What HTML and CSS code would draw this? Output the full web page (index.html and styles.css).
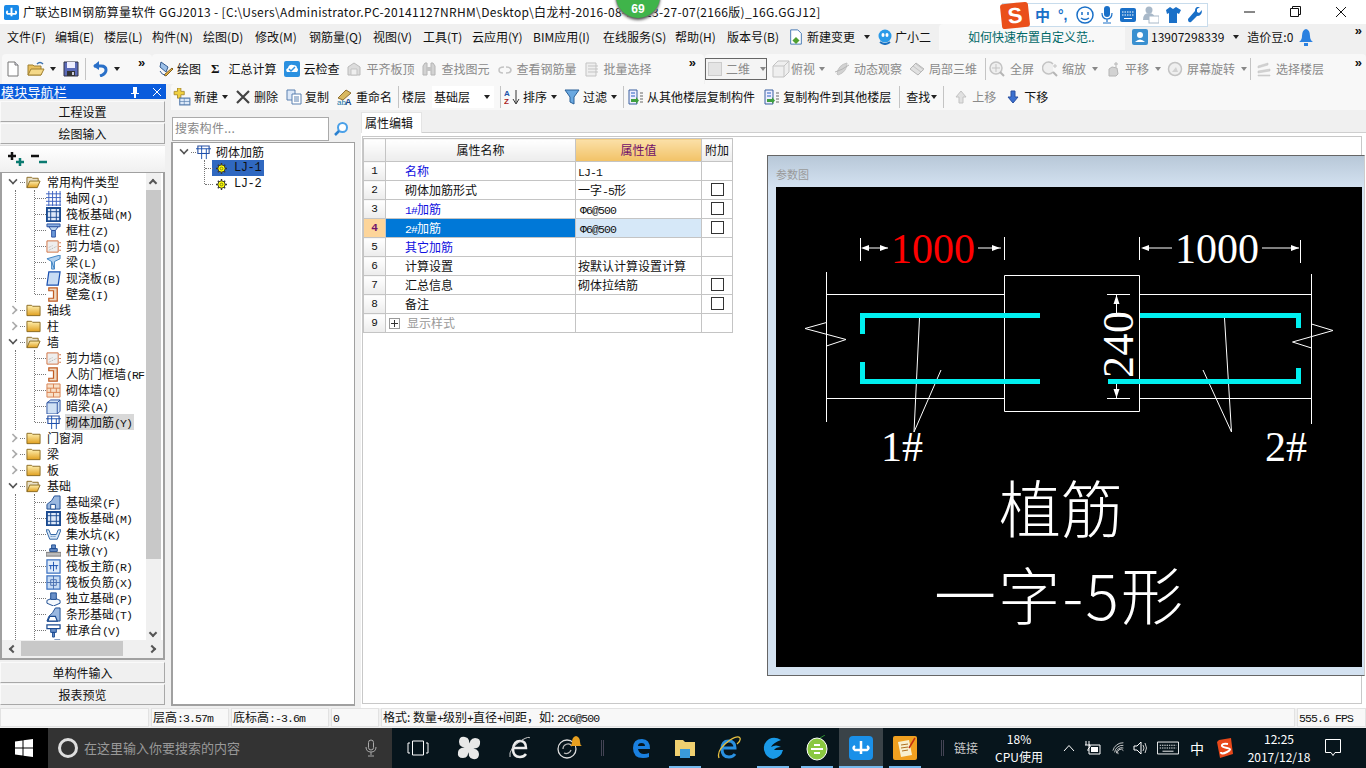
FILE: index.html
```html
<!DOCTYPE html>
<html lang="zh-CN">
<head>
<meta charset="utf-8">
<title>广联达BIM钢筋算量软件 GGJ2013</title>
<link rel="stylesheet" href="styles.css">
</head>
<body>
<svg class="defs" width="0" height="0">
<defs>
<symbol id="new" viewBox="0 0 16 16"><path d="M3 1h7l3 3v11H3z" fill="#fff" stroke="#777"/><path d="M10 1v3h3" fill="#dde" stroke="#777"/></symbol>
<symbol id="open" viewBox="0 0 18 16"><path d="M1 14V4h5l1 1h7v9z" fill="#e8c060" stroke="#a08030"/><path d="M1 14l3-6h13l-3 6z" fill="#f4d888" stroke="#a08030"/><path d="M10 3q3-3 6 0" fill="none" stroke="#3a70b0" stroke-width="1.5"/></symbol>
<symbol id="save" viewBox="0 0 16 16"><path d="M1 1h14v14H1z" fill="#5a6ab8" stroke="#334"/><path d="M4 1h8v6H4z" fill="#eef"/><path d="M4 10h8v5H4z" fill="#333"/><path d="M9 11h2v3H9z" fill="#ccd"/></symbol>
<symbol id="undo" viewBox="0 0 16 16"><path d="M2 5h7q5 0 5 4t-6 6" fill="none" stroke="#2a70c8" stroke-width="3"/><path d="M7 0L1 5l6 4z" fill="#2a70c8"/></symbol>
<symbol id="draw" viewBox="0 0 16 16"><path d="M3 1l7 5-2 5-6-5z" fill="#9cc0e8" stroke="#345a90"/><path d="M6 14l8-7 1 1-7 7z" fill="#e8b040" stroke="#806020"/><path d="M2 10q2 4 5 4" fill="none" stroke="#345a90"/></symbol>
<symbol id="cloud" viewBox="0 0 16 16"><rect width="16" height="16" rx="2" fill="#2a90e0"/><path d="M3 11q-2-3 1-4 1-4 5-3 4 0 4 3 2 1 0 4z" fill="#fff"/><path d="M5 8l2 2 4-4" fill="none" stroke="#2a90e0" stroke-width="1.5"/></symbol>
<symbol id="gray" viewBox="0 0 16 16"><path d="M2 14V6l6-4 6 4v8z" fill="#d8d8d8" stroke="#b0b0b0"/><path d="M5 8h6v6H5z" fill="#eee" stroke="#bbb"/></symbol>
<symbol id="binoc" viewBox="0 0 16 16"><path d="M2 14V5l2-3h2v12zM10 14V2h2l2 3v9z" fill="#ccc" stroke="#aaa"/><path d="M6 6h4v4H6z" fill="#bbb"/></symbol>
<symbol id="link" viewBox="0 0 16 16"><path d="M7 6Q2 6 2 9t4 3M9 6q5 0 5 3t-5 3" fill="none" stroke="#bbb" stroke-width="1.5"/></symbol>
<symbol id="batch" viewBox="0 0 16 16"><path d="M2 2h10v13H2z" fill="#eee" stroke="#bbb"/><path d="M4 5h10M4 8h10M4 11h10" stroke="#bbb"/></symbol>
<symbol id="cube" viewBox="0 0 18 18"><path d="M1 6l5-5h11v11l-5 5H1z" fill="#eee" stroke="#bbb"/><path d="M1 6h11v11M12 6l5-5" fill="none" stroke="#bbb"/></symbol>
<symbol id="orbit" viewBox="0 0 16 16"><path d="M3 13Q4 4 13 2q0 9-9 12z" fill="#ccc" stroke="#bbb"/><path d="M1 11Q8 9 15 4" fill="none" stroke="#aaa"/></symbol>
<symbol id="local" viewBox="0 0 16 16"><path d="M1 8l6-6 8 6-6 6z" fill="#ddd" stroke="#aaa"/><path d="M4 5l8 6M7 3l8 6" stroke="#bbb"/></symbol>
<symbol id="zoom" viewBox="0 0 16 16"><circle cx="7" cy="7" r="6" fill="#eee" stroke="#bbb" stroke-width="1.5"/><path d="M7 3v8M3 7h8" stroke="#bbb"/><path d="M11 11l4 4" stroke="#aaa" stroke-width="2"/></symbol>
<symbol id="zoom2" viewBox="0 0 16 16"><path d="M11 3a6 6 0 1 0 0 8" fill="#eee" stroke="#bbb" stroke-width="1.5"/><path d="M11 11l4 4" stroke="#aaa" stroke-width="2"/><path d="M11 5h4M13 3v4" stroke="#bbb"/></symbol>
<symbol id="pan" viewBox="0 0 16 16"><path d="M4 15V8l3-2 5 1 1 6-2 2z" fill="#ccc" stroke="#aaa"/><path d="M11 1v5M9 3h4" stroke="#aaa"/></symbol>
<symbol id="rot" viewBox="0 0 16 16"><circle cx="8" cy="8" r="6.5" fill="#eee" stroke="#bbb" stroke-width="1.5"/><path d="M5 11l4-5 2 5z" fill="#ccc"/></symbol>
<symbol id="layer" viewBox="0 0 16 16"><path d="M2 5l10-3v2L2 7zM2 10l12-2v2L2 12zM2 14h12v1H2z" fill="#ccc" stroke="#bbb" stroke-width=".5"/></symbol>
<symbol id="plus" viewBox="0 0 16 16"><path d="M7 2h3v3h3v3h-3v3H7V8H4V5h3z" fill="#f0d040" stroke="#a08020" stroke-width=".7" transform="translate(-3 -2)"/><path d="M6 9h9v6H6z" fill="#dbe8f8" stroke="#5a80b0"/><path d="M6 12h9M10 9v6" stroke="#5a80b0" stroke-width=".6"/></symbol>
<symbol id="del" viewBox="0 0 16 16"><path d="M2 2l12 12M14 2L2 14" stroke="#444" stroke-width="2.2"/></symbol>
<symbol id="copy" viewBox="0 0 16 16"><path d="M1 1h8v10H1z" fill="#dce8f8" stroke="#5a80b0"/><path d="M6 5h9v10H6z" fill="#fff" stroke="#5a80b0"/><path d="M8 8h5M8 10h5M8 12h5" stroke="#5a80b0"/></symbol>
<symbol id="rename" viewBox="0 0 16 16"><path d="M1 9l8-8 5 3-8 7z" fill="#d8b860" stroke="#907030"/><text x="0" y="16" font-size="8" fill="#27a" font-family="Liberation Sans">ab</text><text x="8" y="16" font-size="9" fill="#148" font-family="Liberation Sans" font-weight="bold">A</text></symbol>
<symbol id="sort" viewBox="0 0 16 16"><text x="0" y="7" font-size="8" font-weight="bold" fill="#2255aa" font-family="Liberation Sans">A</text><text x="0" y="15" font-size="8" font-weight="bold" fill="#aa2222" font-family="Liberation Sans">Z</text><path d="M12 1v13M9 10l3 5 3-5" fill="none" stroke="#333"/></symbol>
<symbol id="filter" viewBox="0 0 16 16"><path d="M1 1h14L10 8v7l-4-2V8z" fill="#6aa8e0" stroke="#2a6098"/></symbol>
<symbol id="cpl" viewBox="0 0 16 16"><path d="M1 1h8v14H1z" fill="#eef" stroke="#3a60a0"/><path d="M3 4h4M3 7h4" stroke="#2860c0"/><path d="M3 10h5v-2l3 3.500-3 3.500v-2H3z" fill="#40a040"/><path d="M12 4h3M12 7h3M12 10h3M12 13h3" stroke="#666"/></symbol>
<symbol id="up" viewBox="0 0 12 14"><path d="M6 1l5 6H8v6H4V7H1z" fill="#ddd" stroke="#bbb"/></symbol>
<symbol id="down" viewBox="0 0 12 14"><path d="M6 13l5-6H8V1H4v6H1z" fill="#3a70d0" stroke="#2a50a0"/></symbol>
<symbol id="doc" viewBox="0 0 16 18"><path d="M2 1h8l4 4v12H2z" fill="#fff" stroke="#3a70b0"/><path d="M8 9l4 4-4 4-4-4z" fill="#50a030"/></symbol>
<symbol id="bot" viewBox="0 0 16 16"><circle cx="8" cy="7" r="6.500" fill="#2a9ae8"/><ellipse cx="6" cy="6" rx="1.500" ry="2" fill="#fff"/><ellipse cx="10" cy="6" rx="1.500" ry="2" fill="#fff"/><path d="M3 13q5 4 10 0" fill="none" stroke="#1a70c0" stroke-width="2"/></symbol>
<symbol id="user" viewBox="0 0 16 16"><rect width="16" height="16" rx="2" fill="#3a90d0"/><circle cx="8" cy="6" r="3" fill="#fff"/><path d="M3 13q5-5 10 0z" fill="#fff"/></symbol>
<symbol id="bell" viewBox="0 0 14 18"><path d="M7 1Q3 2 3 8q0 4-3 6h14q-3-2-3-6 0-6-4-7z" fill="#2a80e0"/><path d="M5 15h4v3H5z" fill="#2a80e0"/></symbol>
<symbol id="folderc" viewBox="0 0 16 14"><path d="M1 2h5l1 1h8v10H1z" fill="url(#fy)" stroke="#8a6a20"/></symbol>
<symbol id="foldero" viewBox="0 0 16 14"><path d="M1 13V2h5l1 1h6v3" fill="#e8e0c8" stroke="#8a6a20"/><path d="M1 13l3-7h11l-3 7z" fill="url(#fy)" stroke="#8a6a20"/></symbol>
<linearGradient id="fy" x1="0" y1="0" x2="0" y2="1"><stop offset="0" stop-color="#fff0b0"/><stop offset="1" stop-color="#e0a020"/></linearGradient>
<symbol id="t-grid" viewBox="0 0 16 16"><path d="M3 0v16M7 0v16M11 0v16M15 0v16M0 3h16M0 7h16M0 11h16M0 15h16" stroke="#3a60c0" fill="none"/></symbol>
<symbol id="t-raft" viewBox="0 0 16 16"><path d="M1 1h14v14H1z" fill="#dce8f8" stroke="#1a4a90" stroke-width="2"/><path d="M5 1v14M11 1v14M1 5h14M1 11h14" stroke="#1a4a90"/></symbol>
<symbol id="t-col" viewBox="0 0 16 16"><path d="M1 1h14v3H1z" fill="#8ab0e0" stroke="#2a50a0"/><path d="M3 4l3 4h4l3-4z" fill="#c0d8f0" stroke="#2a50a0"/><path d="M6 8h4v7H6z" fill="#6a98d8" stroke="#2a50a0"/></symbol>
<symbol id="t-wall" viewBox="0 0 16 16"><path d="M1 2h12v12H1z" fill="#eee" stroke="#d07040"/><path d="M3 12l8-4M3 9l4-2" stroke="#aaa" stroke-dasharray="1 1"/><path d="M14 4h2M14 8h2M14 12h2" stroke="#d07040"/></symbol>
<symbol id="t-beam" viewBox="0 0 16 16"><path d="M1 4l14-4v4l-6 3v8H6V7z" fill="#b0d0f0" stroke="#3a80c0"/><path d="M6 7l3 8" stroke="#3a80c0"/></symbol>
<symbol id="t-slab" viewBox="0 0 16 16"><path d="M3 1h12l-2 14H1z" fill="#c8dcf4" stroke="#1a50b0" stroke-width="1.300"/></symbol>
<symbol id="t-niche" viewBox="0 0 16 16"><path d="M3 1h9v14H3v-3h5V4H3z" fill="#f0d8c0" stroke="#c05a20" stroke-width="1.300"/></symbol>
<symbol id="t-brick" viewBox="0 0 16 16"><path d="M1 1h14v14H1z" fill="#f8e0c8" stroke="#d88050"/><path d="M1 5.500h14M1 10h14M8 1v4.500M5 5.500V10M11 5.500V10M8 10v5" stroke="#d88050"/></symbol>
<symbol id="t-dark" viewBox="0 0 16 16"><path d="M1 4l4-3h10v12l-3 3H1z" fill="#cfe0f4" stroke="#2a50a0"/><path d="M1 4h11v12M12 4l3-3" fill="none" stroke="#2a50a0"/></symbol>
<symbol id="t-rein" viewBox="0 0 16 16"><path d="M2 1h12v8H2z" fill="none" stroke="#2a50a0" stroke-width="1.200"/><path d="M0 4h16M6 1v14M11 4v11M6 9h5" stroke="#1a50b0"/></symbol>
<symbol id="t-fb" viewBox="0 0 16 16"><path d="M1 15V10l5-4 3-5h6v14z" fill="#9ab8e0" stroke="#1a4a90"/><path d="M5 15V10h5v5z" fill="#fff" stroke="#1a4a90"/></symbol>
<symbol id="t-pit" viewBox="0 0 16 16"><path d="M0 3h3l2 5h6l2-5h3l-4 10H4z" fill="#d8e8f8" stroke="#2a60a0"/><path d="M5 10h6" stroke="#2a60a0" stroke-dasharray="1 1"/></symbol>
<symbol id="t-pier" viewBox="0 0 16 16"><path d="M6 2h4v4H6zM4 6h8v3H4z" fill="#6a90c8" stroke="#1a4a90"/><path d="M0 10h16v4H0z" fill="#bbb" stroke="#777"/></symbol>
<symbol id="t-main" viewBox="0 0 16 16"><path d="M1 1h14v14H1z" fill="#e0ecfa" stroke="#3a70c0" stroke-width="1.300"/><path d="M8 3v10M3 7h10M5 7v4M11 7v4" stroke="#1a50b0"/></symbol>
<symbol id="t-neg" viewBox="0 0 16 16"><path d="M1 1h14v14H1z" fill="#c8dcf4" stroke="#3a70c0" stroke-width="1.300"/><path d="M8 1v14M1 8h14M5 5h6v6H5z" stroke="#4a70b0" fill="none"/></symbol>
<symbol id="t-iso" viewBox="0 0 16 16"><path d="M1 10l7-3 7 3v3l-7 3-7-3z" fill="#f4f8fc" stroke="#1a4a90"/><path d="M5 2h6v7H5z" fill="#6a90c8" stroke="#1a4a90"/></symbol>
<symbol id="t-str" viewBox="0 0 16 16"><path d="M1 15l2-5 4-4 3-5h5v14z" fill="#9ab8e0" stroke="#1a4a90"/><path d="M2 15l2-5h6l2 5z" fill="#fff" stroke="#1a4a90" stroke-width="1.300"/></symbol>
<symbol id="t-cap" viewBox="0 0 16 16"><path d="M1 2h14v4H1z" fill="#fff" stroke="#1a4a90" stroke-width="1.300"/><path d="M5 6h6v4H5zM7 10h2v5H7z" fill="#6a90c8" stroke="#1a4a90"/></symbol>
<symbol id="gear" viewBox="0 0 12 12"><path d="M6 0v12M0 6h12M2 2l8 8M10 2l-8 8" stroke="#333" stroke-width="1.500"/><circle cx="6" cy="6" r="4" fill="#ff0" stroke="#333"/><circle cx="6" cy="6" r="1.500" fill="#ff0" stroke="#333" stroke-width=".6"/></symbol>
</defs>
</svg>

<div class="app">
  <header class="titlebar">
    <svg class="appicon" viewBox="0 0 16 16"><rect width="16" height="16" rx="2" fill="#1a8ae8"/><path d="M8 3v5M4 6.500q-2 1.500 0 3h8q2-1.500 0-3M8 8v4" fill="none" stroke="#fff" stroke-width="2"/></svg>
    <span class="titletext">广联达BIM钢筋算量软件 GGJ2013 - [C:\Users\Administrator.PC-20141127NRHM\Desktop\白龙村-2016-08-18-13-27-07(2166版)_16G.GGJ12]</span>
    <div class="winctl">
      <svg width="46" height="22" viewBox="0 0 46 22"><path d="M18 11h11" stroke="#111"/></svg>
      <svg width="46" height="22" viewBox="0 0 46 22"><path d="M18.500 7.500h8v8h-8zM20.500 7.500v-2h8v8h-2" fill="none" stroke="#111"/></svg>
      <svg width="46" height="22" viewBox="0 0 46 22"><path d="M18 6l10 10M28 6L18 16" stroke="#111"/></svg>
    </div>
  </header>

  <nav class="menubar">
    <div class="menus"><span>文件(F)</span><span>编辑(E)</span><span>楼层(L)</span><span>构件(N)</span><span>绘图(D)</span><span>修改(M)</span><span>钢筋量(Q)</span><span>视图(V)</span><span>工具(T)</span><span>云应用(Y)</span><span>BIM应用(I)</span><span>在线服务(S)</span><span>帮助(H)</span><span>版本号(B)</span></div>
    <span class="m2"><svg class="i16"><use href="#doc"/></svg>新建变更<i class="caret"></i></span>
    <span class="m3"><svg class="i16"><use href="#bot"/></svg>广小二</span>
    <span class="tip">如何快速布置自定义范..</span>
    <span class="acct"><svg class="i16"><use href="#user"/></svg>13907298339<i class="caret"></i></span>
    <span class="beans">造价豆:0</span>
    <svg class="bell"><use href="#bell"/></svg>
    <span class="more m-more">»</span>
  </nav>

  <div class="toolbar1">
    <div class="strip s1">
      <svg class="i16 a"><use href="#new"/></svg>
      <svg class="i18 b"><use href="#open"/></svg><i class="caret car1"></i>
      <svg class="i16 d"><use href="#save"/></svg>
      <i class="vsep e"></i>
      <svg class="i16 f"><use href="#undo"/></svg><i class="caret car2"></i>
      <span class="more s1-more">»</span>
    </div>
    <div class="strip s2">
      <span class="tool n0"><svg class="i16"><use href="#draw"/></svg>绘图</span>
      <span class="tool n1"><b class="sigma">Σ</b>汇总计算</span>
      <span class="tool n2"><svg class="i16"><use href="#cloud"/></svg>云检查</span>
      <span class="tool dim n3"><svg class="i16"><use href="#gray"/></svg>平齐板顶</span>
      <span class="tool dim n4"><svg class="i16"><use href="#binoc"/></svg>查找图元</span>
      <span class="tool dim n5"><svg class="i16"><use href="#link"/></svg>查看钢筋量</span>
      <span class="tool dim n6"><svg class="i16"><use href="#batch"/></svg>批量选择</span>
      <span class="more s2-more">»</span>
    </div>
    <div class="strip s3">
      <span class="combo2"><i class="sq"></i>二维<i class="caret gc"></i></span>
      <span class="tool dim p1"><svg class="i18"><use href="#cube"/></svg>俯视<i class="caret gc"></i></span>
      <span class="tool dim p2"><svg class="i16"><use href="#orbit"/></svg>动态观察</span>
      <span class="tool dim p3"><svg class="i16"><use href="#local"/></svg>局部三维</span>
      <i class="vsep p4"></i>
      <span class="tool dim p5"><svg class="i16"><use href="#zoom"/></svg>全屏</span>
      <span class="tool dim p6"><svg class="i16"><use href="#zoom2"/></svg>缩放<i class="caret gc"></i></span>
      <span class="tool dim p7"><svg class="i16"><use href="#pan"/></svg>平移<i class="caret gc"></i></span>
      <span class="tool dim p8"><svg class="i16"><use href="#rot"/></svg>屏幕旋转<i class="caret gc"></i></span>
      <i class="vsep p9"></i>
      <span class="tool dim p10"><svg class="i16"><use href="#layer"/></svg>选择楼层</span>
      <span class="more s3-more">»</span>
    </div>
  </div>

  <div class="workspace">
    <aside class="nav">
      <div class="navhead"><span>模块导航栏</span>
        <svg class="pin" viewBox="0 0 10 12"><path d="M3 1h4v6h2v1H6v4H4V8H1V7h2z" fill="#fff"/></svg>
        <svg class="close" viewBox="0 0 10 10"><path d="M1 1l8 8M9 1L1 9" stroke="#fff"/></svg>
      </div>
      <button class="navbtn first">工程设置</button>
      <button class="navbtn">绘图输入</button>
      <div class="treetools">
        <svg class="i20" viewBox="0 0 20 16"><path d="M2 5h8M6 1v8" stroke="#111" stroke-width="2.500"/><path d="M10 11h8M14 7v8" stroke="#0a7a70" stroke-width="2.500"/></svg>
        <svg class="i20" viewBox="0 0 20 16"><path d="M1 5h8" stroke="#111" stroke-width="2.500"/><path d="M9 11h8" stroke="#0a7a70" stroke-width="2.500"/></svg>
      </div>
      <div class="treebox">
        <div class="treeview">
          <div class="tg"><i class="chev open"></i><i class="stub"></i><svg class="fold"><use href="#foldero"/></svg>常用构件类型</div>
          <div class="kids0"><div class="kids">
            <div class="ti"><svg class="ico"><use href="#t-grid"/></svg>轴网<span class="l">(J)</span></div>
            <div class="ti"><svg class="ico"><use href="#t-raft"/></svg>筏板基础<span class="l">(M)</span></div>
            <div class="ti"><svg class="ico"><use href="#t-col"/></svg>框柱<span class="l">(Z)</span></div>
            <div class="ti"><svg class="ico"><use href="#t-wall"/></svg>剪力墙<span class="l">(Q)</span></div>
            <div class="ti"><svg class="ico"><use href="#t-beam"/></svg>梁<span class="l">(L)</span></div>
            <div class="ti"><svg class="ico"><use href="#t-slab"/></svg>现浇板<span class="l">(B)</span></div>
            <div class="ti"><svg class="ico"><use href="#t-niche"/></svg>壁龛<span class="l">(I)</span></div>
          </div></div>
          <div class="tg"><i class="chev"></i><i class="stub"></i><svg class="fold"><use href="#folderc"/></svg>轴线</div>
          <div class="tg"><i class="chev"></i><i class="stub"></i><svg class="fold"><use href="#folderc"/></svg>柱</div>
          <div class="tg"><i class="chev open"></i><i class="stub"></i><svg class="fold"><use href="#foldero"/></svg>墙</div>
          <div class="kids0"><div class="kids">
            <div class="ti"><svg class="ico"><use href="#t-wall"/></svg>剪力墙<span class="l">(Q)</span></div>
            <div class="ti"><svg class="ico"><use href="#t-niche"/></svg>人防门框墙<span class="l">(RF</span></div>
            <div class="ti"><svg class="ico"><use href="#t-brick"/></svg>砌体墙<span class="l">(Q)</span></div>
            <div class="ti"><svg class="ico"><use href="#t-dark"/></svg>暗梁<span class="l">(A)</span></div>
            <div class="ti cur"><svg class="ico"><use href="#t-rein"/></svg><span class="curtext">砌体加筋<span class="l">(Y)</span></span></div>
          </div></div>
          <div class="tg"><i class="chev"></i><i class="stub"></i><svg class="fold"><use href="#folderc"/></svg>门窗洞</div>
          <div class="tg"><i class="chev"></i><i class="stub"></i><svg class="fold"><use href="#folderc"/></svg>梁</div>
          <div class="tg"><i class="chev"></i><i class="stub"></i><svg class="fold"><use href="#folderc"/></svg>板</div>
          <div class="tg"><i class="chev open"></i><i class="stub"></i><svg class="fold"><use href="#foldero"/></svg>基础</div>
          <div class="kids0"><div class="kids">
            <div class="ti"><svg class="ico"><use href="#t-fb"/></svg>基础梁<span class="l">(F)</span></div>
            <div class="ti"><svg class="ico"><use href="#t-raft"/></svg>筏板基础<span class="l">(M)</span></div>
            <div class="ti"><svg class="ico"><use href="#t-pit"/></svg>集水坑<span class="l">(K)</span></div>
            <div class="ti"><svg class="ico"><use href="#t-pier"/></svg>柱墩<span class="l">(Y)</span></div>
            <div class="ti"><svg class="ico"><use href="#t-main"/></svg>筏板主筋<span class="l">(R)</span></div>
            <div class="ti"><svg class="ico"><use href="#t-neg"/></svg>筏板负筋<span class="l">(X)</span></div>
            <div class="ti"><svg class="ico"><use href="#t-iso"/></svg>独立基础<span class="l">(P)</span></div>
            <div class="ti"><svg class="ico"><use href="#t-str"/></svg>条形基础<span class="l">(T)</span></div>
            <div class="ti"><svg class="ico"><use href="#t-cap"/></svg>桩承台<span class="l">(V)</span></div>
            <div class="ti"><svg class="ico"><use href="#t-fb"/></svg></div>
          </div></div>
        </div>
        <div class="vscroll"><i class="arrow up"></i><div class="vthumb"></div><i class="arrow dn"></i></div>
        <div class="hscroll"><i class="arrow lf"></i><div class="hthumb"></div><i class="arrow rt"></i></div>
      </div>
      <button class="navbtn low">单构件输入</button>
      <button class="navbtn">报表预览</button>
    </aside>

    <div class="rightcol">
      <div class="toolbar2">
        <span class="tool q1"><svg class="i18"><use href="#plus"/></svg>新建<i class="caret"></i></span>
        <span class="tool q2"><svg class="i16"><use href="#del"/></svg>删除</span>
        <span class="tool q3"><svg class="i16"><use href="#copy"/></svg>复制</span>
        <span class="tool q4"><svg class="i16"><use href="#rename"/></svg>重命名</span>
        <i class="vsep t2"></i>
        <span class="q5">楼层</span>
        <span class="floor">基础层<i class="caret"></i></span>
        <i class="vsep t2"></i>
        <span class="tool q6"><svg class="i16"><use href="#sort"/></svg>排序<i class="caret"></i></span>
        <span class="tool q7"><svg class="i16"><use href="#filter"/></svg>过滤<i class="caret"></i></span>
        <i class="vsep t2 q8"></i>
        <span class="tool q9"><svg class="i16"><use href="#cpl"/></svg>从其他楼层复制构件</span>
        <span class="tool q10"><svg class="i16"><use href="#cpl"/></svg>复制构件到其他楼层</span>
        <i class="vsep t2 q11"></i>
        <span class="q12">查找<i class="caret"></i></span>
        <i class="vsep t2 q13"></i>
        <span class="tool dim q14"><svg class="i12"><use href="#up"/></svg>上移</span>
        <span class="tool q15"><svg class="i12"><use href="#down"/></svg>下移</span>
      </div>
      <div class="panes">
        <section class="listpane">
          <div class="searchrow">
            <span class="search">搜索构件...</span>
            <svg class="mag" viewBox="0 0 16 16"><circle cx="9.500" cy="6.500" r="4.500" fill="#fff" stroke="#4aa0e8" stroke-width="2"/><path d="M6 10l-4 4" stroke="#2a80d0" stroke-width="2.500"/></svg>
          </div>
          <div class="listbox">
            <div class="lroot"><i class="chev open"></i><i class="stub"></i><svg class="ico"><use href="#t-rein"/></svg>砌体加筋</div>
            <div class="lkids">
              <div class="li"><span class="lsel"><svg class="gear"><use href="#gear"/></svg><span class="l">LJ-1</span></span></div>
              <div class="li"><span class="lun"><svg class="gear"><use href="#gear"/></svg><span class="l">LJ-2</span></span></div>
            </div>
          </div>
        </section>
        <section class="props">
          <div class="tabs"><span class="tab">属性编辑</span></div>
          <div class="propbody">
            <table class="grid">
              <colgroup><col class="col0"><col class="col1"><col class="col2"><col class="col3"></colgroup>
              <thead><tr><th class="hd0"></th><th>属性名称</th><th class="hval">属性值</th><th>附加</th></tr></thead>
              <tbody>
                <tr><td class="no">1</td><td class="nm blue">名称</td><td class="val"><span class="l">LJ-1</span></td><td></td></tr>
                <tr><td class="no">2</td><td class="nm">砌体加筋形式</td><td class="val">一字<span class="l">-5</span>形</td><td><i class="cb"></i></td></tr>
                <tr><td class="no">3</td><td class="nm blue"><span class="l">1#</span>加筋</td><td class="val"><span class="l ph">Φ6@500</span></td><td><i class="cb"></i></td></tr>
                <tr class="act"><td class="no">4</td><td class="nm"><span class="l">2#</span>加筋</td><td class="val"><span class="l ph">Φ6@500</span></td><td><i class="cb"></i></td></tr>
                <tr><td class="no">5</td><td class="nm blue">其它加筋</td><td class="val"></td><td></td></tr>
                <tr><td class="no">6</td><td class="nm">计算设置</td><td class="val">按默认计算设置计算</td><td></td></tr>
                <tr><td class="no">7</td><td class="nm">汇总信息</td><td class="val">砌体拉结筋</td><td><i class="cb"></i></td></tr>
                <tr><td class="no">8</td><td class="nm">备注</td><td class="val"></td><td><i class="cb"></i></td></tr>
                <tr><td class="no">9</td><td class="nm gr"><i class="exp"></i>显示样式</td><td class="val"></td><td></td></tr>
              </tbody>
            </table>
          </div>
        </section>
      </div>
    </div>
  </div>

  <footer class="statusbar">
    <span class="sc s-a"></span>
    <span class="sc s-b">层高<span class="l">:3.57m</span></span>
    <span class="sc s-c">底标高<span class="l">:-3.6m</span></span>
    <span class="sc s-d"><span class="l">0</span></span>
    <span class="sc s-e">格式: 数量<span class="l">+</span>级别<span class="l">+</span>直径<span class="l">+</span>间距，如: <span class="l">2C6@500</span></span>
    <span class="sc s-f"><span class="l">555.6 FPS</span></span>
  </footer>

  <div class="taskbar">
    <div class="start"><svg width="18" height="18" viewBox="0 0 18 18"><path d="M0 2.500l7.500-1v7H0zM8.500 1.300L18 0v8.500H8.500zM0 9.500h7.500v7l-7.500-1zM8.500 9.500H18V18l-9.500-1.300z" fill="#fff"/></svg></div>
    <div class="tsearch"><i class="ring"></i><span>在这里输入你要搜索的内容</span>
      <svg class="mic" viewBox="0 0 12 18"><rect x="3.500" y="1" width="5" height="10" rx="2.500" fill="none" stroke="#aaa"/><path d="M1 8q0 5 5 5t5-5M6 13v3M3 17h6" fill="none" stroke="#aaa"/></svg>
    </div>
    <div class="tcell wide"><svg width="22" height="16" viewBox="0 0 22 16"><path d="M5.500 1h11v14h-11zM3 3H1v10h2M19 3h2v10h-2" fill="none" stroke="#fff"/></svg></div>
    <div class="tcell wide"><svg width="24" height="24" viewBox="0 0 24 24"><g fill="#e8e8e8"><path d="M12 12Q2 12 2 6t6-5 4 11zM12 12q0-10 6-10t5 6-11 4zM12 12q10 0 10 6t-6 5-4-11zM12 12q0 10-6 10t-5-6 11-4z"/></g></svg></div>
    <div class="tcell wide"><svg width="24" height="26" viewBox="0 0 24 26"><path d="M5 13h13Q18 6 12 6t-7 8q0 8 7 8 4 0 6-3" fill="none" stroke="#eee" stroke-width="2.500"/><path d="M2 22Q0 14 14 5q7-4 8-2" fill="none" stroke="#ccc"/></svg></div>
    <div class="tcell wide bellcell"><svg width="28" height="26" viewBox="0 0 28 26"><circle cx="10" cy="14" r="9" fill="none" stroke="#ddd" stroke-width="1.300"/><path d="M6 14a5 5 0 0 1 9-3M14 15a5 5 0 0 1-7 3" fill="none" stroke="#bbb" stroke-width="1.300"/><path d="M19 1q-4 1-4 6 0 3-2 4h12q-2-1-2-4 0-5-4-6z" fill="#e8a020"/></svg></div>
    <i class="tsep s-one"></i>
    <div class="tcell"><svg width="22" height="24" viewBox="0 0 22 24"><path d="M3 12q0-9 9-9 8 0 8 10H8q1 5 6 5 3 0 5-1v4q-2 1-6 1-10 0-10-10zM8 10h7q0-3-3.500-3T8 10z" fill="#1a80e0"/></svg></div>
    <div class="tcell run"><svg width="22" height="20" viewBox="0 0 22 20"><path d="M1 2h8l2 2h10v14H1z" fill="#f0d070"/><path d="M6 11h10v9H6z" fill="#3a9ad8"/></svg></div>
    <div class="tcell"><svg width="26" height="26" viewBox="0 0 26 26"><path d="M6 13h13q0-7-6.500-7T6 14q0 8 7 8 4 0 6-3" fill="none" stroke="#2a90e0" stroke-width="3"/><path d="M3 23Q0 15 14 5q8-5 10-2 1 3-3 6" fill="none" stroke="#e8c040" stroke-width="1.300"/></svg></div>
    <div class="tcell run"><svg width="24" height="26" viewBox="0 0 24 26"><path d="M20 5Q14 1 8 4 2 8 3 15q2 8 9 9 8-1 10-9h-9q2-3 7-3-5-3-10 0 2-4 10-7z" fill="#1a9ae8"/></svg></div>
    <div class="tcell run"><svg width="24" height="26" viewBox="0 0 24 26"><ellipse cx="12" cy="14" rx="10" ry="11" fill="#8ac840" stroke="#fff"/><path d="M6 14h12M9 10h6M9 18h6" stroke="#fff" stroke-width="2"/><path d="M15 3l5-3" stroke="#2a8a30"/></svg></div>
    <div class="tcell run active"><svg width="24" height="24" viewBox="0 0 24 24"><rect width="24" height="24" rx="4" fill="#1a90e8"/><path d="M12 5v7M6 10q-3 2 0 4h12q3-2 0-4M12 12v6" fill="none" stroke="#fff" stroke-width="2.500"/></svg></div>
    <div class="tcell run"><svg width="24" height="24" viewBox="0 0 24 24"><rect width="24" height="24" rx="2" fill="#f0a020"/><path d="M5 6l11-2 3 15-11 2z" fill="#f8f0d0"/><path d="M8 9l7-1M8 12l7-1M9 15l6-1" stroke="#b07020"/><path d="M16 12l6-10" stroke="#c03010" stroke-width="1.500"/></svg></div>
    <i class="tsep s-two"></i>
    <span class="linkword">链接</span>
    <span class="cpu"><span>18%</span><span>CPU使用</span></span>
    <div class="tray">
      <svg width="12" height="8" viewBox="0 0 12 8"><path d="M1 7l5-5.500L11 7" fill="none" stroke="#fff"/></svg>
      <svg class="t1" width="16" height="14" viewBox="0 0 16 14"><path d="M4 4h11v9H4z" fill="none" stroke="#fff"/><path d="M6 6h7v5H6z" fill="#fff"/><path d="M1 0v4M4 0v4M0 4h5v2L3 8v2" fill="none" stroke="#fff"/></svg>
      <svg class="t2x" width="14" height="16" viewBox="0 0 16 16"><path d="M1 11a12 12 0 0 1 12-9M3 13a9 9 0 0 1 10-8M5 14a6 6 0 0 1 8-6M7 15a3 3 0 0 1 6-4" fill="none" stroke="#ddd"/></svg>
      <svg class="t3" width="16" height="16" viewBox="0 0 16 16"><path d="M1 6h3l4-4v12l-4-4H1z" fill="none" stroke="#fff"/><path d="M10 5q2 3 0 6M12 3q3 5 0 10" fill="none" stroke="#ccc"/></svg>
      <svg class="t4" width="22" height="14" viewBox="0 0 24 14"><path d="M.500.500h23v13H.500z" fill="none" stroke="#fff"/><path d="M3 4h18M3 7h18" stroke="#fff" stroke-dasharray="1.500 1"/><path d="M6 10.500h12" stroke="#fff"/></svg>
      <span class="zh">中</span>
      <svg class="t5" width="16" height="20" viewBox="0 0 16 20"><path d="M2 2l12-2 2 16-13 4L0 4z" fill="#e8481a"/><path d="M11 6Q6 5 5 7t5 3 0 4-6 0" fill="none" stroke="#fff" stroke-width="2"/></svg>
    </div>
    <div class="clock"><span>12:25</span><span>2017/12/18</span></div>
    <svg class="notif" width="16" height="18" viewBox="0 0 16 18"><path d="M.500.500h15v13H10l-2 3-2-3H.500z" fill="none" stroke="#fff"/></svg>
  </div>
</div>

<div class="badge">69</div>
<div class="ime">
  <span class="imelogo">S</span>
  <span class="imezh">中</span>
  <span class="imep">°,</span>
  <svg width="18" height="18" viewBox="0 0 18 18"><circle cx="9" cy="9" r="8" fill="#fff" stroke="#1a70c8" stroke-width="1.500"/><path d="M6 6v3M12 6v3M5 12q4 3 8 0" fill="none" stroke="#1a70c8" stroke-width="1.500"/></svg>
  <svg width="12" height="18" viewBox="0 0 12 18"><rect x="3" y="0" width="6" height="11" rx="3" fill="#1a70c8"/><path d="M1 7q0 6 5 6t5-6M6 13v3M2 17h8" fill="none" stroke="#1a70c8" stroke-width="1.200"/></svg>
  <svg width="16" height="14" viewBox="0 0 16 14"><rect width="16" height="14" rx="2" fill="#1a70c8"/><path d="M2 4h12M2 7h12" stroke="#fff" stroke-dasharray="1.500 1"/><path d="M4 10.500h8" stroke="#fff"/></svg>
  <svg width="16" height="18" viewBox="0 0 16 18"><circle cx="6" cy="4" r="3.500" fill="#a8b8c8"/><path d="M0 14q0-7 6-7t6 7z" fill="#a8b8c8"/><rect x="6" y="10" width="10" height="7" fill="#fff" stroke="#a8b8c8"/></svg>
  <svg width="15" height="16" viewBox="0 0 15 16"><path d="M4 0l3 2 3-2 5 3-2 4-2-1v10H3V6L1 7 0 3z" fill="#1a70c8"/></svg>
  <svg width="14" height="16" viewBox="0 0 14 16"><path d="M14 3l-3 3-2-1V2l3-2q-5-1-5 4L0 12q0 4 3 3l6-6q5 0 5-6z" fill="#1a70c8"/></svg>
</div>

<div class="paramwin">
  <div class="paramtitle">参数图</div>
  <svg class="drawing" viewBox="776 187 586 480">
    <g stroke="#fff" fill="none" stroke-width="1">
      <path d="M860.500 238v23M864 248h24M1004.500 237v23M978 248h23M1139.500 237v23M1143 248h29M1262 248h37M1300.500 240v23"/>
      <path d="M1004.500 275.500h135v136h-135zM826.500 294.500h178M1139.500 294.500h172M826.500 398.500h178M1139.500 398.500h172M826.500 272v150M1311.500 274v150"/>
      <path d="M826.500 322.500L805 328.500l41 11-19.500 6.500M1311.500 324l21.500 6.500-40.500 11.500 19 6"/>
      <path d="M1107 294.500h23M1107 398.500h23M1116.500 294v20M1116.500 380v18"/>
      <path d="M919.500 318L914 432l27-62M1224.500 318l7 114-28.500-62"/>
    </g>
    <g fill="#fff">
      <path d="M861 248l8-3v6zM888 248l-8-3v6M1000 248l-8-3v6zM1141 248l8-3v6zM1299 248l-8-3v6zM1116.500 295l-3 9h6zM1116.500 398l-3-9h6z"/>
    </g>
    <g fill="#00f0f0">
      <path d="M860 313h180v5H865v16h-5z"/>
      <path d="M860 362h5v17h175v5H860z"/>
      <path d="M1140 313h161v15h-5v-10h-156z"/>
      <path d="M1108 379h188v-11h5v16h-193z"/>
    </g>
    <text class="num red" x="891" y="263">1000</text>
    <text class="num" x="1175" y="263">1000</text>
    <text class="num big" transform="translate(1133 378) rotate(-90)" x="0" y="0">240</text>
    <text class="num" x="881" y="461">1#</text>
    <text class="num" x="1265" y="461">2#</text>
    <text class="cap" x="999" y="533">植筋</text>
    <text class="cap" x="934" y="620" textLength="249" lengthAdjust="spacing">一字-5形</text>
  </svg>
</div>
</body>
</html>
```
FILE: styles.css
```css
*{box-sizing:border-box}
html,body{margin:0;padding:0;width:1366px;height:768px;overflow:hidden}
body{font:12px/16px "Noto Sans CJK SC","Liberation Sans",sans-serif;color:#111;background:#f0f0f0;position:relative}
i{font-style:normal;display:inline-block}
.defs{position:absolute}
.app{width:1366px;height:768px;display:flex;flex-direction:column}
svg{display:block;flex:none}
.i16{width:16px;height:16px}.i18{width:18px;height:18px}.i12{width:12px;height:14px}.i20{width:20px;height:16px}
.l{font-family:"Liberation Mono",monospace;font-size:11.500px;letter-spacing:-.9px;line-height:1}

.titlebar{height:24px;background:#fff;display:flex;align-items:center;padding-left:4px;flex:none}
.appicon{width:15px;height:15px;margin-right:4px}
.titletext{font-size:12px;white-space:nowrap;letter-spacing:.33px}
.winctl{display:flex;margin-left:auto;padding-right:2px}

.menubar{height:26px;display:flex;align-items:center;flex:none;white-space:nowrap;background:#f0f0f0}
.menus{display:grid;grid-template-columns:48px 49px 48px 51px 52px 54px 64px 50px 49px 61px 70px 72px 52px 61px;padding-left:7px;width:788px}
.m2{display:flex;align-items:center;gap:3px}
.m3{display:flex;align-items:center;gap:2px;margin-left:7px}
.tip{width:186px;height:26px;margin-left:8px;background:#f8f8f8;color:#006868;padding-left:29px;line-height:26px;border-radius:4px 4px 0 0}
.acct{display:flex;align-items:center;gap:3px;margin-left:7px}
.beans{margin-left:8px}
.bell{width:14px;height:18px;margin-left:6px}
.more{font:bold 13px/12px "Liberation Sans",sans-serif;color:#111}
.m-more{margin-left:auto;padding-right:4px;margin-top:-12px}
.caret{width:0;height:0;border:3px solid transparent;border-top:4px solid #222;border-bottom:0;margin-left:6px;flex:none}
.gc{border-top-color:#888}

.toolbar1{height:30px;margin-top:4px;display:flex;flex:none}
.strip{height:30px;background:#f8f8f8;display:flex;align-items:center;border-radius:4px 4px 0 0}
.s1{width:150px;margin-left:2px;padding-left:3px;position:relative}
.s1 .b{margin-left:6px}.car1{margin-left:5px}.s1 .d{margin-left:7px}
.vsep{width:1px;height:22px;background:#c4c4c4;flex:none}
.s1 .e{margin:0 6px}.car2{margin-left:6px}
.s1-more{margin-left:18px;margin-top:-12px}
.s2{width:552px;padding-left:6px}
.tool{display:flex;align-items:center;gap:5px;white-space:nowrap}
.dim{color:#8a8a8a}
.dim svg{opacity:.85}
.sigma{font:bold 13px/16px "Liberation Serif",serif;margin-left:4px;margin-right:4px}
.n0{gap:3px}
.n1{margin-left:6px}
.n2{margin-left:7px;gap:4px}
.n3{margin-left:6px}.n4{margin-left:6px}.n5{margin-left:7px;gap:4px}.n6{margin-left:7px;gap:4px}
.s2-more{margin-left:auto;margin-right:8px;margin-top:-12px}
.s3{flex:1;margin-left:1px}
.combo2{width:62px;height:22px;border:1px solid #666;display:flex;align-items:center;color:#8a8a8a;padding-left:2px;background:#f4f4f4;gap:4px;white-space:nowrap}
.sq{width:14px;height:14px;background:#e4e4e4;border:1px solid #ccc;flex:none}
.combo2 .gc{margin-left:6px}
.s3 .tool .gc{margin-left:2px}
.p1{margin-left:5px;gap:1px}
.s3 .p1 .gc{margin-left:3px}
.p2{margin-left:9px;gap:4px}.p3{margin-left:7px;gap:4px}
.p4{margin-left:8px}
.p5{margin-left:3px}.p6{margin-left:8px;gap:4px}.p7{margin-left:7px;gap:4px}.p8{margin-left:6px;gap:4px}
.p9{margin-left:3px}.p10{margin-left:5px;gap:4px}
.s3-more{margin-left:auto;margin-right:4px;margin-top:-12px}

.workspace{height:624px;display:flex;flex:none}
.nav{width:166px;flex:none;display:flex;flex-direction:column;position:relative}
.navhead{height:15px;background:#0a5cdc;color:#fff;font-size:13px;line-height:15px;letter-spacing:.2px;display:flex;align-items:center;padding-left:1px}
.navhead span{flex:1}
.pin{width:10px;height:12px;margin-right:12px}
.close{width:10px;height:10px;margin-right:4px}
.navbtn{font:12px/16px "Noto Sans CJK SC",sans-serif;color:#111;width:165px;height:21px;padding:0;background:#f0f0f0;border:1px solid #a8a8a8;border-top-color:#fafafa;border-left-color:#fafafa;margin-bottom:1px;flex:none}
.navbtn.first{margin-top:2px}
.navbtn.low{margin-top:2px}
.treetools{width:165px;height:27px;background:linear-gradient(#fff,#f0f0f0);display:flex;align-items:center;gap:4px;padding-left:6px;border-top:1px solid #ddd}
.treebox{width:165px;height:488px;border:2px solid #a0a0a0;border-top-width:1px;background:#fff;position:relative;overflow:hidden}
.treeview{height:467px;width:144px;overflow:hidden;padding-top:1px;white-space:nowrap}
.tg{height:16px;display:flex;align-items:center;position:relative;padding-left:7px}
.chev{width:8px;height:8px;flex:none;border-right:2px solid #aaa;border-bottom:2px solid #aaa;transform:rotate(-45deg) scale(.8);margin-right:1px}
.chev.open{border-color:#555;transform:translateY(-2px) rotate(45deg) scale(.8)}
.stub{width:5px;height:0;border-top:1px dotted #777;margin:0 1px 0 2px;flex:none}
.fold{width:15px;height:14px;margin-right:6px}
.kids0{margin-left:13px;border-left:1px dotted #777;padding-left:18px}
.kids{border-left:1px dotted #777}
.ti{height:16px;display:flex;align-items:baseline;position:relative;padding-left:11px}
.ti .ico{align-self:center}
.ti::before{content:"";position:absolute;left:0;top:8px;width:11px;border-top:1px dotted #777}
.ti:last-child::after{content:"";position:absolute;left:-1px;top:9px;bottom:0;width:1px;background:#fff}
.ico{width:15px;height:15px;margin-right:5px;position:relative}
.cur .curtext{background:#d8d8d8;padding-right:2px;margin-left:-1px;padding-left:1px;display:block;height:16px}
.vscroll{position:absolute;right:2px;top:0;width:15px;height:468px;background:#f0f0f0}
.vthumb{height:369px;margin-top:17px;background:#c8c8c8}
.hscroll{position:absolute;left:0;bottom:0;width:161px;height:18px;background:#f0f0f0}
.hthumb{position:absolute;left:19px;width:102px;height:15px;top:1px;background:#c8c8c8}
.arrow{width:6px;height:6px;border-left:2px solid #555;border-top:2px solid #555;position:absolute}
.arrow.up{left:4px;top:7px;transform:rotate(45deg)}
.arrow.dn{left:4px;bottom:5px;transform:rotate(225deg)}
.arrow.lf{left:8px;top:6px;transform:rotate(-45deg)}
.arrow.rt{right:8px;top:6px;transform:rotate(135deg)}

.rightcol{flex:1;display:flex;flex-direction:column;min-width:0}
.toolbar2{height:26px;margin-left:5px;background:#f8f8f8;display:flex;align-items:center;white-space:nowrap;border-radius:4px 0 0 0;padding-left:2px;flex:none}
.toolbar2 .tool{gap:3px}
.toolbar2 .caret{margin-left:1px}
.q2{margin-left:7px}.q3{margin-left:8px}.q4{margin-left:8px}
.t2{margin-left:6px;margin-right:3px}
.floor{width:62px;height:22px;background:#fff;display:flex;align-items:center;justify-content:space-between;padding:0 4px 0 2px;margin-left:6px}
.q7{margin-left:7px}
.q8{margin-left:6px}
.q9{margin-left:1px}.q10{margin-left:9px}
.q11{margin-left:8px}.q13{margin-left:6px}
.q12{display:flex;align-items:center;margin-left:3px}
.q14{margin-left:8px}.q15{margin-left:11px}
.toolbar2 .i12{margin-right:2px}

.panes{flex:1;display:flex;min-height:0}
.listpane{width:184px;margin-left:5px;flex:none;display:flex;flex-direction:column;padding-top:7px}
.searchrow{height:24px;display:flex;align-items:center;margin-left:1px}
.search{width:157px;height:24px;background:#fff;border:1px solid #aaa;color:#888;line-height:20px;padding-left:2px;font-size:12px;letter-spacing:.3px}
.mag{width:16px;height:16px;margin-left:4px}
.listbox{margin-top:1px;height:564px;background:#fff;border:2px solid #a0a0a0;border-top-width:1px;border-right-width:1px;padding-top:1px}
.lroot{height:16px;display:flex;align-items:center;padding-left:7px}
.lroot .stub{margin-right:0}
.lroot .ico{margin-right:5px}
.lkids{margin-left:31px;border-left:1px dotted #777;height:32px}
.li{height:16px;position:relative;padding-left:7px;display:flex;align-items:center}
.li::before{content:"";position:absolute;left:0;top:8px;width:8px;border-top:1px dotted #777}
.li:last-child::after{content:"";position:absolute;left:-1px;top:9px;bottom:0;width:1px;background:#fff}
.lsel,.lun{display:flex;align-items:center;height:16px;width:52px;padding-left:4px}
.lsel{background:#3068c0}
.gear{width:11px;height:11px;margin-right:7px}
.li .l{font-size:12px;letter-spacing:-.4px}

.props{flex:1;min-width:0;margin-left:6px;padding-top:2px;display:flex;flex-direction:column}
.tabs{height:21px;border-bottom:1px solid #cfcfcf;flex:none}
.tab{display:block;width:61px;height:21px;background:#fff;border:1px solid #e4e4e4;border-bottom:0;padding-left:3px;line-height:20px;font-size:12px}
.propbody{flex:1;background:#fff;padding:4px 4px 4px 1px;position:relative}
.propbody::before{content:"";position:absolute;left:1px;right:4px;top:3px;bottom:4px;border:1px solid #c8c8c8;pointer-events:none}
.grid{border-collapse:collapse;table-layout:fixed;width:370px;margin-top:1px;margin-left:1px;position:relative;background:#fff}
.col0{width:22px}.col1{width:190px}.col2{width:126px}.col3{width:31px}
.grid th,.grid td{border:1px solid #c4c4c4;padding:0;height:19px;font-weight:400;line-height:14px;overflow:hidden;white-space:nowrap}
.grid thead th{height:23px;background:linear-gradient(#fff,#ececec);text-align:center}
.grid .hval{background:linear-gradient(#fbe0a8,#f2c266);color:#70106a}
.no{background:linear-gradient(#fff,#ececec);text-align:center;font-family:"Liberation Mono",monospace;font-size:11px}
.grid .nm{padding-left:19px}
.blue{color:#1010e0}
.grid .gr{color:#999;padding-left:3px}
.grid .val{padding-left:2px}
.ph{padding-left:2px}
.act .no{background:#fdd59a;color:#70106a;font-weight:700}
.act .nm{background:#0078d7;color:#fff}
.act .val{background:#d6e8f8}
.cb{display:block;width:13px;height:13px;border:1px solid #333;background:#fff;margin:0 auto 0 9px;transform:translateY(-1px)}
.exp{width:11px;height:11px;border:1px solid #999;margin-right:7px;background:linear-gradient(#333,#333) center/7px 1px no-repeat,linear-gradient(#333,#333) center/1px 7px no-repeat,#fff;vertical-align:-1px}

.statusbar{height:20px;display:flex;flex:none;gap:2px}
.sc{height:19px;background:#f8f8f8;border:1px solid #e2e2e2;line-height:16px;padding-left:1px;white-space:nowrap;overflow:hidden}
.s-a{width:149px}.s-b{width:78px}.s-c{width:98px}.s-d{width:48px}.s-e{width:914px}.s-f{flex:1}

.taskbar{height:40px;background:#07151c;display:flex;align-items:center;color:#fff;flex:none;position:relative}
.start{width:48px;height:40px;background:#000;display:flex;align-items:center;justify-content:center}
.tsearch{width:344px;height:40px;background:#333;display:flex;align-items:center;color:#999;font-size:13px;padding-left:10px}
.ring{width:20px;height:20px;border:3px solid #ddd;border-radius:50%;margin-right:6px;flex:none}
.mic{width:12px;height:18px;margin-left:auto;margin-right:15px}
.tcell{width:44px;height:40px;display:flex;align-items:center;justify-content:center;position:relative;flex:none}
.tcell.wide{width:51px}
.run::after{content:"";position:absolute;left:6px;right:6px;bottom:0;height:2px;background:#76b9ed}
.active{background:#3a4348}
.active::after{left:0;right:0}
.tsep{width:3px;height:16px;border-left:1px solid #445;border-right:1px solid #445;flex:none}
.s-one{margin:0 15px 0 5px}
.s-two{margin:0 0 0 14px}
.linkword{margin-left:10px;font-size:12px;color:#ccc;width:24px;white-space:nowrap}
.cpu{display:flex;flex-direction:column;align-items:center;margin-left:9px;width:64px;line-height:18px;font-size:12px}
.tray{display:flex;align-items:center;margin-left:12px}
.t1{margin-left:10px}.t2x{margin-left:11px}.t3{margin-left:7px}.t4{margin-left:8px}
.zh{margin-left:11px;font-size:14px}
.t5{margin-left:13px}
.clock{display:flex;flex-direction:column;align-items:center;margin-left:13px;width:66px;line-height:18px;font-size:12px}
.notif{margin-left:auto;margin-right:25px}

.badge{position:absolute;left:616px;top:-26px;width:44px;height:44px;border-radius:50%;background:#3fb44a;color:#fff;font:bold 12px/12px "Liberation Sans",sans-serif;text-align:center;padding-top:29px;box-shadow:0 2px 3px #555,0 0 0 1px #ddd}
.ime{position:absolute;left:1002px;top:3px;width:206px;height:24px;background:#fff;border:1px solid #c8dcec;display:flex;align-items:center;gap:7px;padding-left:32px}
.imelogo{position:absolute;left:-2px;top:-1px;width:28px;height:25px;background:#ea4f1a;color:#fff;font:bold 22px/25px "Liberation Sans",sans-serif;text-align:center;border-radius:3px;transform:rotate(-6deg)}
.imezh{color:#1a70c8;font-size:15px;font-weight:700;margin-right:1px}
.imep{color:#1a70c8;font:bold 14px/16px "Liberation Sans",sans-serif;margin-right:1px}

.paramwin{position:absolute;left:767px;top:155px;width:598px;height:521px;border:1px solid #666;border-right-color:#ccc;background:linear-gradient(#b8c8d8,#d4e2f1 32px,#d4e2f1);padding:31px 2px 8px 8px}
.paramtitle{position:absolute;left:8px;top:10px;color:#999;font-size:11px;line-height:16px}
.drawing{width:586px;height:480px;background:#000}
.num{font:42px "Liberation Serif",serif;fill:#fff}
.num.red{fill:#ff0000}
.num.big{font-size:44px;letter-spacing:.5px}
.cap{font:300 62px "Noto Sans CJK SC",sans-serif;fill:#fff}
```
